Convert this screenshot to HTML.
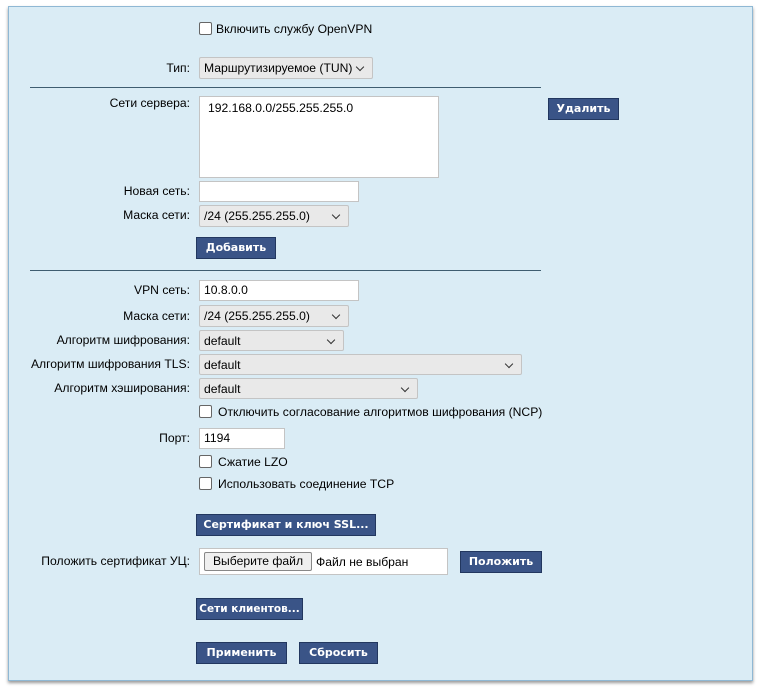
<!DOCTYPE html>
<html><head><meta charset="utf-8"><style>
body{margin:0;width:766px;height:693px;background:#fff;font-family:"Liberation Sans","DejaVu Sans",sans-serif;font-size:12.15px;color:#000;position:relative;overflow:hidden}
.panel{position:absolute;left:8px;top:6px;width:743px;height:673px;background:#daecf5;border:1px solid #8fb8d4;box-shadow:0 2px 3px #999}
.a{position:absolute;white-space:nowrap}
.l{position:absolute;right:576px;text-align:right;white-space:nowrap;line-height:14px}
.t{position:absolute;white-space:nowrap;line-height:14px}
.sel{position:absolute;background:#e9e9e9;border:1px solid #c4c4c4;box-sizing:border-box;border-radius:2px;padding-left:4px;line-height:20px;white-space:nowrap}
.sel:after{content:"";position:absolute;right:9px;top:6px;width:5px;height:5px;border-right:1.5px solid #333;border-bottom:1.5px solid #333;transform:rotate(45deg)}
.inp{position:absolute;background:#fff;border:1px solid #c4c4c4;box-sizing:border-box;padding-left:4px;line-height:18px;white-space:nowrap}
.cb{position:absolute;width:11px;height:11px;border:1px solid #666;border-radius:2px;background:#fff}
.btn{position:absolute;background:#3a5487;border:1px solid #22375f;box-sizing:border-box;color:#fff;font-weight:bold;text-align:center;line-height:20px;font-family:"DejaVu Sans",sans-serif;font-size:11px;white-space:nowrap}
.hr{position:absolute;left:30px;width:511px;height:1px;background:#3f5d70}
</style></head><body>
<div class="panel"></div>
<div class="cb" style="left:199px;top:22px"></div><div class="t" style="left:216px;top:22px">Включить службу OpenVPN</div>
<div class="l" style="top:61px">Тип:</div><div class="sel" style="left:199px;top:57px;width:174px;height:22px">Маршрутизируемое (TUN)</div>
<div class="hr" style="top:87px"></div>
<div class="l" style="top:96px">Сети сервера:</div>
<div class="inp" style="left:199px;top:96px;width:240px;height:82px;padding:4px 8px;line-height:14px">192.168.0.0/255.255.255.0</div>
<div class="btn" style="left:548px;top:98px;width:71px;height:22px">Удалить</div>
<div class="l" style="top:184px">Новая сеть:</div><div class="inp" style="left:199px;top:181px;width:160px;height:21px"></div>
<div class="l" style="top:208px">Маска сети:</div><div class="sel" style="left:199px;top:205px;width:150px;height:22px">/24 (255.255.255.0)</div>
<div class="btn" style="left:196px;top:237px;width:80px;height:22px">Добавить</div>
<div class="hr" style="top:270px"></div>
<div class="l" style="top:283px">VPN сеть:</div><div class="inp" style="left:199px;top:280px;width:160px;height:21px">10.8.0.0</div>
<div class="l" style="top:309px">Маска сети:</div><div class="sel" style="left:199px;top:305px;width:150px;height:22px">/24 (255.255.255.0)</div>
<div class="l" style="top:333px">Алгоритм шифрования:</div><div class="sel" style="left:199px;top:330px;width:145px;height:21px">default</div>
<div class="l" style="top:357px">Алгоритм шифрования TLS:</div><div class="sel" style="left:199px;top:354px;width:323px;height:21px">default</div>
<div class="l" style="top:381px">Алгоритм хэширования:</div><div class="sel" style="left:199px;top:378px;width:219px;height:21px">default</div>
<div class="cb" style="left:199px;top:405px"></div><div class="t" style="left:218px;top:405px">Отключить согласование алгоритмов шифрования (NCP)</div>
<div class="l" style="top:431px">Порт:</div><div class="inp" style="left:199px;top:428px;width:86px;height:21px">1194</div>
<div class="cb" style="left:199px;top:455px"></div><div class="t" style="left:218px;top:455px">Сжатие LZO</div>
<div class="cb" style="left:199px;top:477px"></div><div class="t" style="left:218px;top:477px">Использовать соединение TCP</div>
<div class="btn" style="left:196px;top:514px;width:180px;height:22px">Сертификат и ключ SSL...</div>
<div class="l" style="top:554px">Положить сертификат УЦ:</div>
<div class="inp" style="left:199px;top:548px;width:249px;height:27px;padding-left:4px">
<div class="a" style="left:4px;top:3px;width:108px;height:19px;background:#efefef;border:1px solid #888;border-radius:2px;box-sizing:border-box;text-align:center;line-height:17px">Выберите файл</div>
<div class="a" style="left:116px;top:4px">Файл не выбран</div></div>
<div class="btn" style="left:460px;top:551px;width:82px;height:22px">Положить</div>
<div class="btn" style="left:196px;top:598px;width:107px;height:22px;font-size:10.5px">Сети клиентов...</div>
<div class="btn" style="left:196px;top:642px;width:91px;height:22px">Применить</div>
<div class="btn" style="left:299px;top:642px;width:79px;height:22px">Сбросить</div>
</body></html>
